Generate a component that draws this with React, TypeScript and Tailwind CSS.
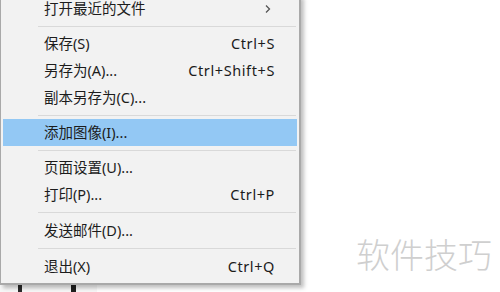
import React from 'react';

type Item =
  | { kind: 'sep'; tall?: boolean }
  | { kind: 'item'; label: string; shortcut?: string; submenu?: boolean; active?: boolean };

const items: Item[] = [
  { kind: 'item', label: '打开最近的文件', submenu: true },
  { kind: 'sep' },
  { kind: 'item', label: '保存(S)', shortcut: 'Ctrl+S' },
  { kind: 'item', label: '另存为(A)...', shortcut: 'Ctrl+Shift+S' },
  { kind: 'item', label: '副本另存为(C)...' },
  { kind: 'sep' },
  { kind: 'item', label: '添加图像(I)...', active: true },
  { kind: 'sep' },
  { kind: 'item', label: '页面设置(U)...' },
  { kind: 'item', label: '打印(P)...', shortcut: 'Ctrl+P' },
  { kind: 'sep', tall: true },
  { kind: 'item', label: '发送邮件(D)...' },
  { kind: 'sep', tall: true },
  { kind: 'item', label: '退出(X)', shortcut: 'Ctrl+Q' },
];

const font = { fontFamily: '"Noto Sans", "Noto Sans CJK SC", sans-serif' };

export default function App() {
  return (
    <div className="relative w-[500px] h-[292px] bg-white overflow-hidden" style={font}>
      {/* stuff behind the menu */}
      <div className="absolute left-0 top-[280px] w-[97px] h-[12px] bg-[#f7f7f7]">
        <div className="absolute left-[18px] top-[4px] w-[4px] h-[8px] bg-[#2a2a2a]" />
        <div className="absolute left-[71px] top-[4px] w-[5px] h-[8px] bg-[#1e1e1e]" />
      </div>

      {/* menu */}
      <div className="relative w-[301px] -mt-[5px] pb-[3px] bg-[#f2f2f2] border-r-2 border-b-2 border-l border-[#a9a9a9] shadow-[3px_3px_4px_rgba(0,0,0,0.25)] text-[14.5px] text-[#1c1c1c]">
        {items.map((it, i) =>
          it.kind === 'sep' ? (
            <div
              key={i}
              className={`${it.tall ? 'h-[9px]' : 'h-[8px]'} flex items-center pl-[37px] pr-[3px]`}
            >
              <div className="h-px w-full bg-[#d9d9d9]" />
            </div>
          ) : (
            <div
              key={i}
              className={`h-[27px] mx-[2px] flex items-center justify-between pl-[41px] pr-[22px] ${
                it.active ? 'bg-[#93c8f4]' : ''
              }`}
            >
              <span>{it.label}</span>
              {it.shortcut && <span className="tracking-[0.6px]">{it.shortcut}</span>}
              {it.submenu && (
                <svg width="8" height="10" viewBox="0 0 8 10" className="mr-[3px]">
                  <path d="M2 1.5 L5.5 5 L2 8.5" fill="none" stroke="#555" strokeWidth="1.3" />
                </svg>
              )}
            </div>
          )
        )}
      </div>

      {/* watermark */}
      <div
        className="absolute left-[356px] top-[237px] text-[34px] font-light leading-none text-[#cfcfcf]"
        style={{ fontFamily: '"Noto Sans CJK SC", sans-serif' }}
      >
        软件技巧
      </div>
    </div>
  );
}
